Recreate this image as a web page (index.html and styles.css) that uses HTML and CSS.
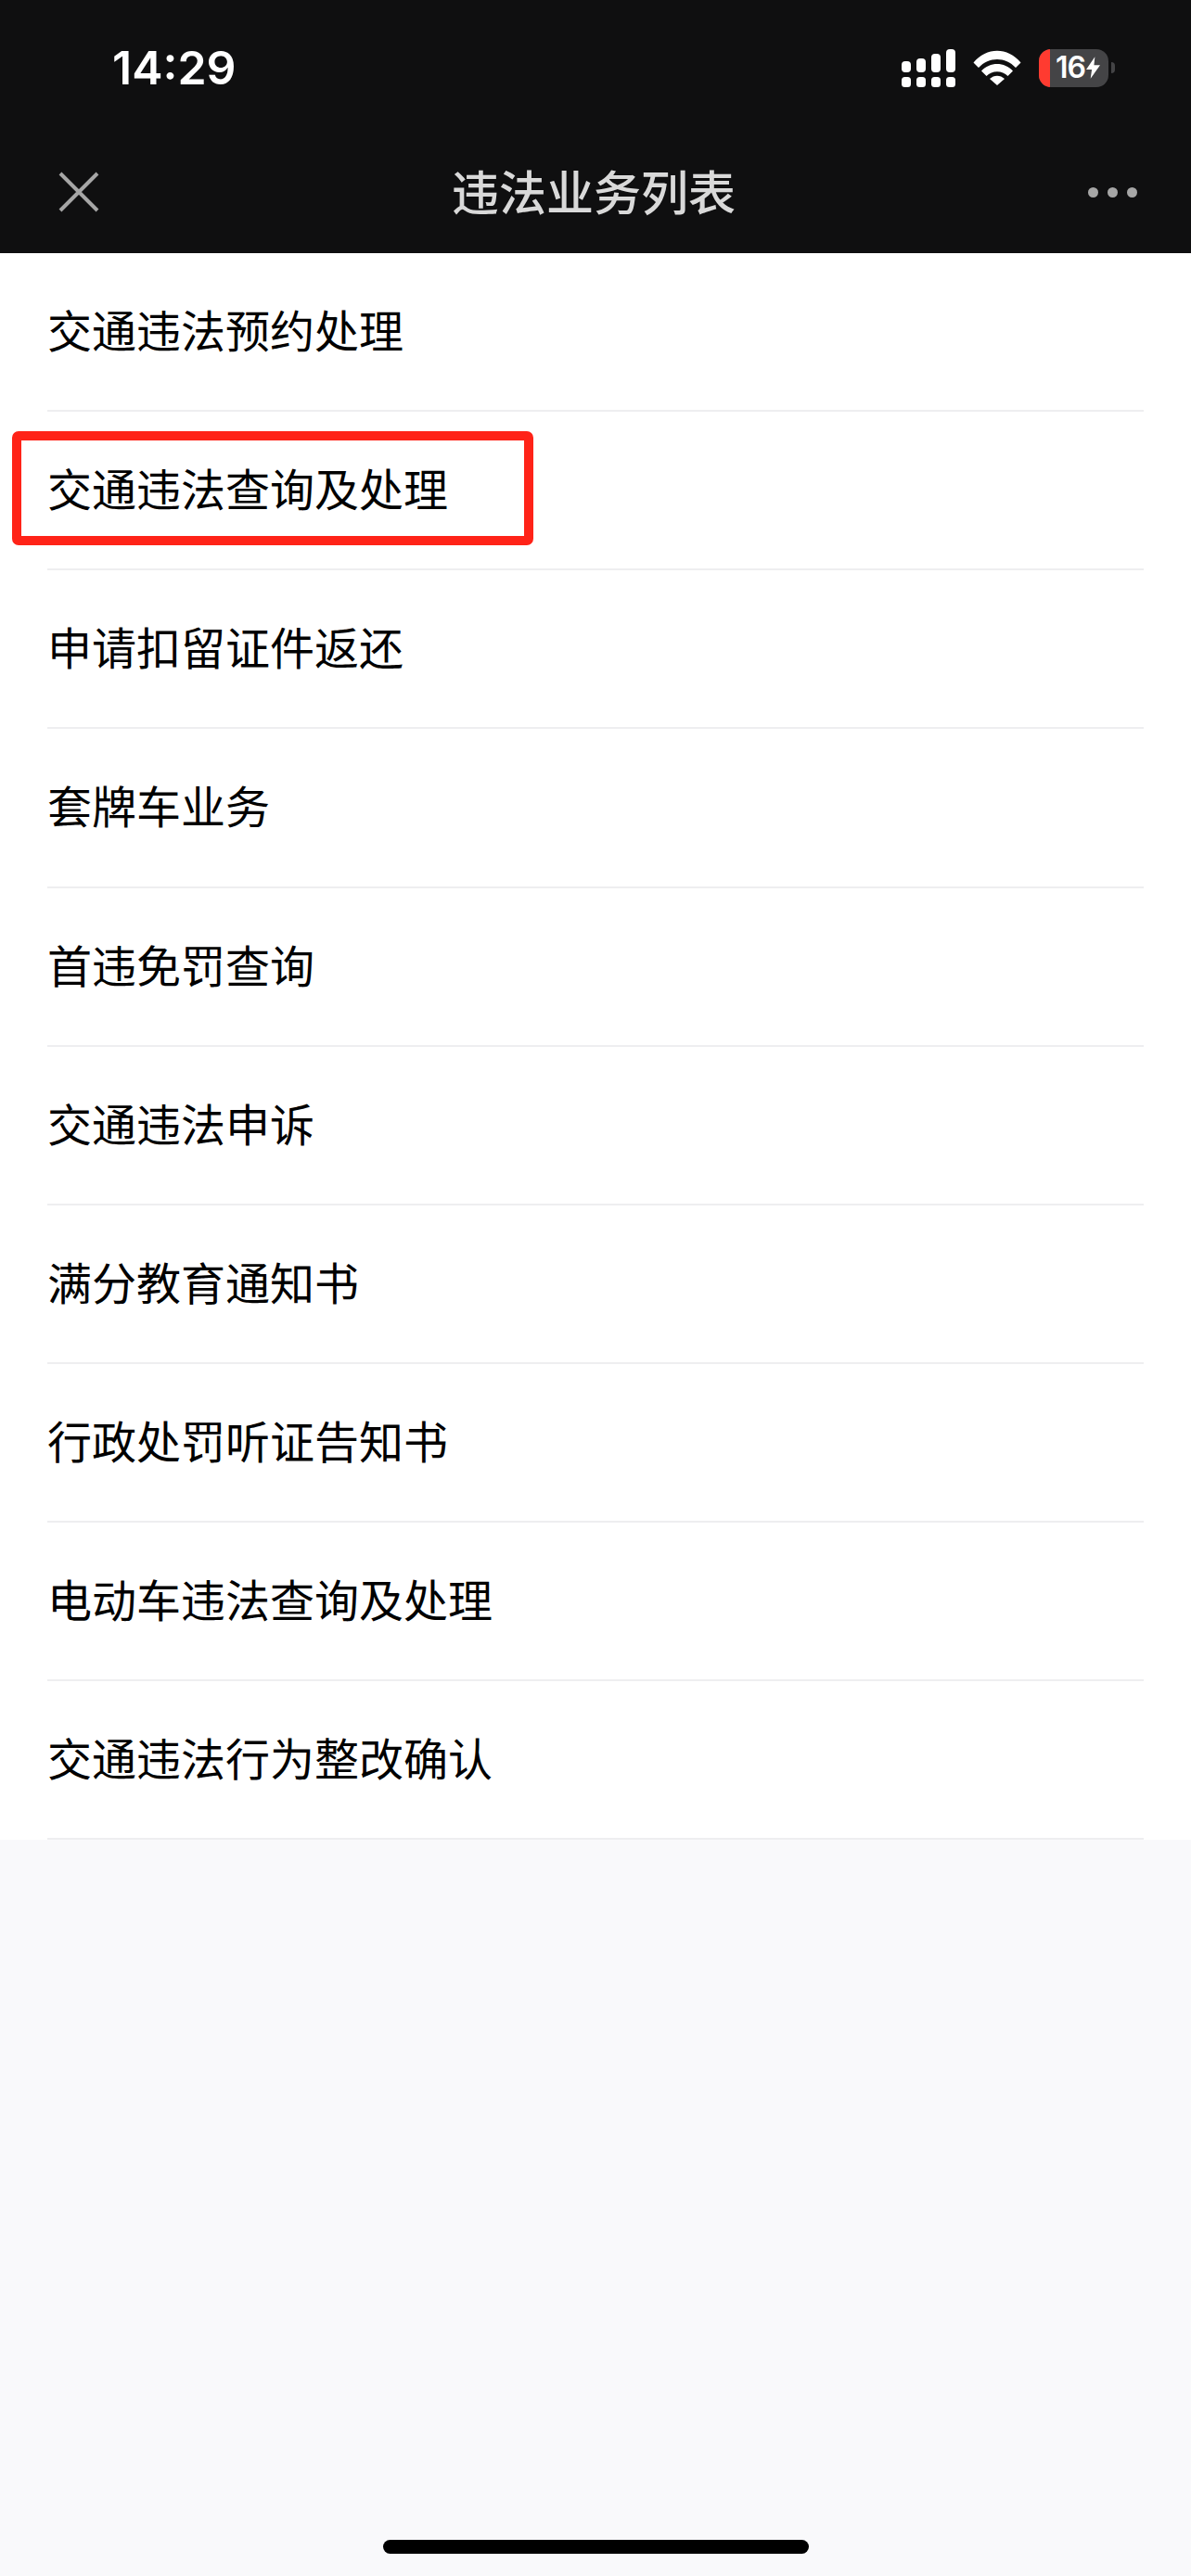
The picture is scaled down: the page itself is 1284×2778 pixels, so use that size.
FILE: index.html
```html
<!DOCTYPE html>
<html lang="zh-CN">
<head>
    <meta charset="UTF-8">
    <meta name="viewport" content="width=device-width, initial-scale=1.0">
    <title>违法业务列表</title>
    <link rel="stylesheet" href="styles.css">
</head>
<body>
<header class="top-bar">
    <div class="status-bar">
        <span class="status-time">14:29</span>
        <div class="status-icons">
            <svg class="icon-signal" width="58" height="41" viewBox="0 0 58 41" fill="#fff">
                <rect x="0" y="13" width="10" height="12" rx="4"/>
                <rect x="16" y="10" width="10" height="15" rx="4"/>
                <rect x="32" y="5" width="10" height="20" rx="4"/>
                <rect x="48" y="0" width="10" height="25" rx="4"/>
                <rect x="0" y="30" width="10" height="11" rx="3.5"/>
                <rect x="16" y="30" width="10" height="11" rx="3.5"/>
                <rect x="32" y="30" width="10" height="11" rx="3.5"/>
                <rect x="48" y="30" width="10" height="11" rx="3.5"/>
            </svg>
            <svg class="icon-wifi" width="52" height="38" viewBox="0 0 52 38" fill="#fff">
                <path d="M0.5 13.5 C14.5 -3.5 37.5 -3.5 51.5 13.5 L46 19 C35 7 17 7 6 19 Z"/>
                <path d="M9 22.5 C18 12.5 34 12.5 43 22.5 L37.5 28 C31.5 21.5 20.5 21.5 14.5 28 Z"/>
                <path d="M18 31 C22.5 26.5 29.5 26.5 34 31 L26 38 Z"/>
            </svg>
            <div class="battery">
                <div class="battery-body">
                    <span class="battery-level"></span>
                    <span class="battery-text">16</span>
                    <svg class="icon-bolt" width="15" height="24" viewBox="0 0 16 25" fill="#fff">
                        <path d="M10 0 L0 14.5 H6.5 L5 25 L16 9.5 H9 Z"/>
                    </svg>
                </div>
                <span class="battery-nub"></span>
            </div>
        </div>
    </div>
    <nav class="nav-bar">
        <svg class="icon-close" width="44" height="44" viewBox="0 0 44 44">
            <path d="M2 2 L42 42 M42 2 L2 42" stroke="#a6a6a6" stroke-width="4" fill="none"/>
        </svg>
        <h1 class="nav-title">违法业务列表</h1>
        <div class="nav-more">
            <span class="more-dot"></span>
            <span class="more-dot"></span>
            <span class="more-dot"></span>
        </div>
    </nav>
</header>

<ul class="biz-list">
    <li class="biz-item"><span class="biz-name">交通违法预约处理</span></li>
    <li class="biz-item biz-item-marked">
        <span class="biz-name">交通违法查询及处理</span>
        <span class="red-box"></span>
    </li>
    <li class="biz-item"><span class="biz-name">申请扣留证件返还</span></li>
    <li class="biz-item"><span class="biz-name">套牌车业务</span></li>
    <li class="biz-item"><span class="biz-name">首违免罚查询</span></li>
    <li class="biz-item"><span class="biz-name">交通违法申诉</span></li>
    <li class="biz-item"><span class="biz-name">满分教育通知书</span></li>
    <li class="biz-item"><span class="biz-name">行政处罚听证告知书</span></li>
    <li class="biz-item"><span class="biz-name">电动车违法查询及处理</span></li>
    <li class="biz-item"><span class="biz-name">交通违法行为整改确认</span></li>
</ul>

<div class="home-bar"></div>
</body>
</html>
```

FILE: styles.css
```css
html, body {
    margin: 0;
    padding: 0;
}

body {
    width: 1284px;
    height: 2778px;
    background-color: #f9f9fb;
    font-family: "Noto Sans CJK SC", "Noto Sans", sans-serif;
    position: relative;
    overflow: hidden;
}

.top-bar {
    height: 273px;
    background-color: #0f0f10;
}

.status-bar {
    height: 146px;
    display: flex;
    justify-content: space-between;
    align-items: center;
    padding: 0 82px 0 121px;
}

.status-time {
    color: #ffffff;
    font-family: Inter, sans-serif;
    font-size: 50px;
    font-weight: 600;
    line-height: 1;
}

.status-icons {
    display: flex;
    align-items: center;
    gap: 19px;
}

.battery {
    display: flex;
    align-items: center;
    gap: 3px;
}

.battery-body {
    width: 75px;
    height: 41px;
    border-radius: 13px;
    background-color: #444446;
    overflow: hidden;
    display: flex;
    align-items: center;
}

.battery-level {
    width: 12px;
    height: 100%;
    background-color: #ff3b30;
    margin-right: 6px;
}

.battery-text {
    color: #ffffff;
    font-family: Inter, sans-serif;
    font-size: 32px;
    font-weight: 600;
    line-height: 1;
    letter-spacing: -1px;
    margin-right: 1px;
}

.battery-nub {
    width: 4px;
    height: 12px;
    border-radius: 0 6px 6px 0;
    background-color: #444446;
}

.nav-bar {
    height: 122px;
    display: grid;
    grid-template-columns: 1fr auto 1fr;
    align-items: center;
    padding: 0 58px;
}

.icon-close {
    margin-left: 5px;
}

.nav-title {
    margin: 0 4px 4px 0;
    color: #d9d9d9;
    font-size: 51px;
    font-weight: 500;
    line-height: 1;
}

.nav-more {
    display: flex;
    justify-content: flex-end;
    gap: 10px;
}

.more-dot {
    width: 11px;
    height: 11px;
    border-radius: 50%;
    background-color: #a6a6a6;
}

.biz-list {
    list-style: none;
    margin: 0;
    padding: 0;
    background-color: #ffffff;
}

.biz-item {
    height: 171.15px;
    box-sizing: border-box;
    margin-left: 51px;
    padding-bottom: 7px;
    width: 1182px;
    display: flex;
    align-items: center;
    border-bottom: 2px solid #eeeef0;
    position: relative;
}

.biz-name {
    color: #000000;
    font-size: 48px;
    line-height: 1;
}

.red-box {
    position: absolute;
    left: -38px;
    top: 21px;
    width: 562px;
    height: 123px;
    box-sizing: border-box;
    border: 10px solid #ff2318;
    border-radius: 7px;
}

.home-bar {
    position: absolute;
    left: 413px;
    top: 2739px;
    width: 459px;
    height: 15px;
    border-radius: 8px;
    background-color: #000000;
}
```
